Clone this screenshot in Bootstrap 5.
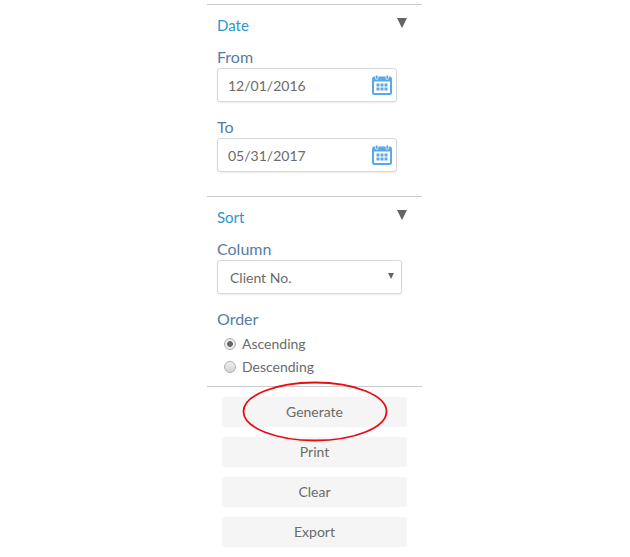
<!DOCTYPE html>
<html lang="en">
<head>
    <meta charset="UTF-8">
    <title>Report filter</title>
    <link href="https://cdn.jsdelivr.net/npm/bootstrap@5.3.0/dist/css/bootstrap.min.css" rel="stylesheet">
    <style>
        body { font-family: Lato, "Open Sans", sans-serif; background: #fff; color: #6b6b6b; }
        .filter-panel { width: 215px; margin-left: 207px; padding-top: 4px; position: relative; }
        .filter-section { border-top: 1px solid #ccc; padding: 0 10px; }
        .date-section { height: 192px; }
        .sort-section { height: 190px; }
        .section-head { height: 41px; padding-top: 11px; font-size: 15px; line-height: 18px; color: #2b96cc; }
        .head-arrow { width: 0; height: 0; margin-right: 5px; margin-top: 2px; border-left: 5.5px solid transparent; border-right: 5.5px solid transparent; border-top: 10px solid #636363; }
        .field-label { font-size: 16px; line-height: 22px; height: 22px; margin: 0; color: #567ba6; }
        .date-box { width: 180px; height: 34px; margin-bottom: 14px; padding: 0 4px 0 10px; background: #fff; border: 1px solid #d8d8d8; border-radius: 3px; box-shadow: 0 1px 2px rgba(0,0,0,.08); font-size: 14px; color: #6b6b6b; }
        .select-box { width: 185px; height: 34px; margin-bottom: 14px; padding: 0 7px 0 12px; background: #fff; border: 1px solid #d8d8d8; border-radius: 3px; box-shadow: 0 1px 2px rgba(0,0,0,.08); font-size: 14px; color: #6b6b6b; }
        .select-caret { width: 0; height: 0; margin-bottom: 3px; border-left: 3px solid transparent; border-right: 3px solid transparent; border-top: 6px solid #666; }
        .radio-list { padding-top: 2px; }
        .radio-row { height: 23px; padding-left: 7px; gap: 6px; font-size: 14px; color: #6b6b6b; }
        .radio-dot { width: 12px; height: 12px; border: 1px solid #b0b0b0; border-radius: 50%; background: linear-gradient(#f0f0f0, #d2d2d2); flex: none; }
        .radio-dot.checked { background: radial-gradient(circle, #666 0 2.5px, #ececec 3.2px); }
        .action-list { border-top: 1px solid #ccc; padding: 10px 0 0 15px; gap: 10px; }
        .action-btn { width: 185px; height: 30px; padding: 0; border: 0; border-radius: 3px; background: #f5f5f5; color: #6b6b6b; font-size: 14px; line-height: 30px; }
        .red-ellipse { position: absolute; left: 35px; top: 381px; }
    </style>
</head>
<body>
    <div class="filter-panel">
        <div class="filter-section date-section">
            <div class="section-head d-flex justify-content-between align-items-start">
                <span>Date</span>
                <span class="head-arrow"></span>
            </div>
            <label class="field-label d-block">From</label>
            <div class="date-box d-flex align-items-center justify-content-between">
                <span>12/01/2016</span>
                <svg width="20" height="20" viewBox="0 0 20 20"><rect x="0" y="1.5" width="20" height="18.5" rx="2.5" fill="#5aa9e6"/><rect x="2" y="6.5" width="16" height="11.5" fill="#fff"/><rect x="3.5" y="0" width="2.5" height="4.5" rx="1.2" fill="#5aa9e6" stroke="#fff" stroke-width=".7"/><rect x="14" y="0" width="2.5" height="4.5" rx="1.2" fill="#5aa9e6" stroke="#fff" stroke-width=".7"/><path d="M4.5 8.5h3v3h-3zM8.5 8.5h3v3h-3zM12.5 8.5h3v3h-3zM4.5 12.5h3v3h-3zM8.5 12.5h3v3h-3zM12.5 12.5h3v3h-3z" fill="#5aa9e6"/></svg>
            </div>
            <label class="field-label d-block">To</label>
            <div class="date-box d-flex align-items-center justify-content-between">
                <span>05/31/2017</span>
                <svg width="20" height="20" viewBox="0 0 20 20"><rect x="0" y="1.5" width="20" height="18.5" rx="2.5" fill="#5aa9e6"/><rect x="2" y="6.5" width="16" height="11.5" fill="#fff"/><rect x="3.5" y="0" width="2.5" height="4.5" rx="1.2" fill="#5aa9e6" stroke="#fff" stroke-width=".7"/><rect x="14" y="0" width="2.5" height="4.5" rx="1.2" fill="#5aa9e6" stroke="#fff" stroke-width=".7"/><path d="M4.5 8.5h3v3h-3zM8.5 8.5h3v3h-3zM12.5 8.5h3v3h-3zM4.5 12.5h3v3h-3zM8.5 12.5h3v3h-3zM12.5 12.5h3v3h-3z" fill="#5aa9e6"/></svg>
            </div>
        </div>

        <div class="filter-section sort-section">
            <div class="section-head d-flex justify-content-between align-items-start">
                <span>Sort</span>
                <span class="head-arrow"></span>
            </div>
            <label class="field-label d-block">Column</label>
            <div class="select-box d-flex align-items-center justify-content-between">
                <span>Client No.</span>
                <span class="select-caret"></span>
            </div>
            <label class="field-label d-block">Order</label>
            <div class="radio-list">
                <div class="radio-row d-flex align-items-center"><span class="radio-dot checked"></span>Ascending</div>
                <div class="radio-row d-flex align-items-center"><span class="radio-dot"></span>Descending</div>
            </div>
        </div>

        <div class="action-list d-flex flex-column">
            <button class="btn action-btn">Generate</button>
            <button class="btn action-btn">Print</button>
            <button class="btn action-btn">Clear</button>
            <button class="btn action-btn">Export</button>
        </div>

        <svg class="red-ellipse" width="146" height="61" viewBox="0 0 146 61"><ellipse cx="73" cy="30.5" rx="71.5" ry="29" fill="none" stroke="#e80c14" stroke-width="1.8"/></svg>
    </div>
</body>
</html>
